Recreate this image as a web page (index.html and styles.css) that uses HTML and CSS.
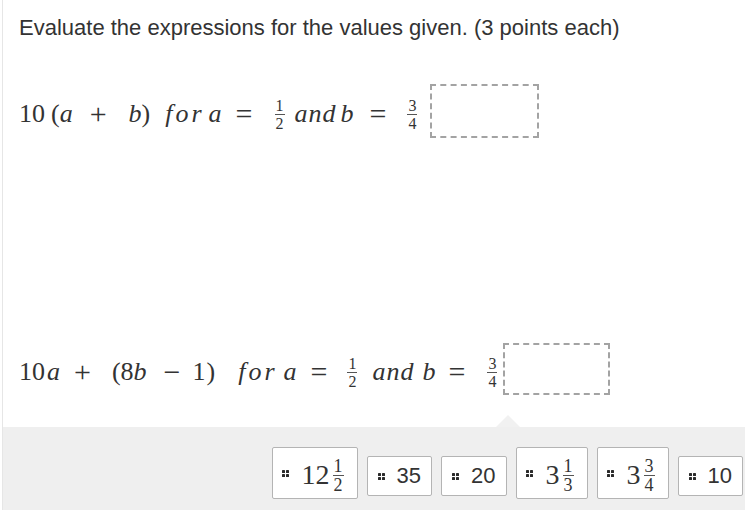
FILE: index.html
```html
<!DOCTYPE html>
<html>
<head>
<meta charset="utf-8">
<link rel="stylesheet" href="styles.css">
</head>
<body>
<div class="page">
  <p class="prompt">Evaluate the expressions for the values given. (3 points each)</p>

  <div class="ex ex1">
    <span class="m">10</span>
    <span class="m g6">(</span>
    <span class="m v">a</span>
    <span class="m o g17">+</span>
    <span class="m v g22">b</span>
    <span class="m">)</span>
    <span class="m v w-for g15">for</span>
    <span class="m v g7">a</span>
    <span class="m o g14">=</span>
    <span class="frac g22"><span class="num">1</span><span class="den">2</span></span>
    <span class="m v w-and g10">and</span>
    <span class="m v g5">b</span>
    <span class="m o g16">=</span>
    <span class="frac g21"><span class="num">3</span><span class="den">4</span></span>
    <span class="drop drop1 g13"></span>
  </div>

  <div class="ex ex2">
    <span class="m">10</span>
    <span class="m v g2">a</span>
    <span class="m o g14">+</span>
    <span class="m g21">(</span>
    <span class="m">8</span>
    <span class="m v">b</span>
    <span class="m o g17">&minus;</span>
    <span class="m g12">1</span>
    <span class="m g1">)</span>
    <span class="m v w-for g23">for</span>
    <span class="m v g9">a</span>
    <span class="m o g14">=</span>
    <span class="frac g20"><span class="num">1</span><span class="den">2</span></span>
    <span class="m v w-and g15">and</span>
    <span class="m v g9">b</span>
    <span class="m o g13">=</span>
    <span class="frac g22"><span class="num">3</span><span class="den">4</span></span>
    <span class="drop drop2 g6"></span>
  </div>

  <div class="tray">
    <span class="notch"></span>
    <div class="tile tall">
      <svg class="grip" width="7" height="7" viewBox="0 0 7 7"><rect x="0" y="0" width="3" height="3" rx="0.6"/><rect x="4" y="0" width="3" height="3" rx="0.6"/><rect x="0" y="4" width="3" height="3" rx="0.6"/><rect x="4" y="4" width="3" height="3" rx="0.6"/></svg>
      <span class="tm">12</span><span class="frac tf"><span class="num">1</span><span class="den">2</span></span>
    </div>
    <div class="tile short">
      <svg class="grip" width="7" height="7" viewBox="0 0 7 7"><rect x="0" y="0" width="3" height="3" rx="0.6"/><rect x="4" y="0" width="3" height="3" rx="0.6"/><rect x="0" y="4" width="3" height="3" rx="0.6"/><rect x="4" y="4" width="3" height="3" rx="0.6"/></svg>
      <span class="ts">35</span>
    </div>
    <div class="tile short">
      <svg class="grip" width="7" height="7" viewBox="0 0 7 7"><rect x="0" y="0" width="3" height="3" rx="0.6"/><rect x="4" y="0" width="3" height="3" rx="0.6"/><rect x="0" y="4" width="3" height="3" rx="0.6"/><rect x="4" y="4" width="3" height="3" rx="0.6"/></svg>
      <span class="ts">20</span>
    </div>
    <div class="tile tall">
      <svg class="grip" width="7" height="7" viewBox="0 0 7 7"><rect x="0" y="0" width="3" height="3" rx="0.6"/><rect x="4" y="0" width="3" height="3" rx="0.6"/><rect x="0" y="4" width="3" height="3" rx="0.6"/><rect x="4" y="4" width="3" height="3" rx="0.6"/></svg>
      <span class="tm">3</span><span class="frac tf"><span class="num">1</span><span class="den">3</span></span>
    </div>
    <div class="tile tall">
      <svg class="grip" width="7" height="7" viewBox="0 0 7 7"><rect x="0" y="0" width="3" height="3" rx="0.6"/><rect x="4" y="0" width="3" height="3" rx="0.6"/><rect x="0" y="4" width="3" height="3" rx="0.6"/><rect x="4" y="4" width="3" height="3" rx="0.6"/></svg>
      <span class="tm">3</span><span class="frac tf"><span class="num">3</span><span class="den">4</span></span>
    </div>
    <div class="tile short">
      <svg class="grip" width="7" height="7" viewBox="0 0 7 7"><rect x="0" y="0" width="3" height="3" rx="0.6"/><rect x="4" y="0" width="3" height="3" rx="0.6"/><rect x="0" y="4" width="3" height="3" rx="0.6"/><rect x="4" y="4" width="3" height="3" rx="0.6"/></svg>
      <span class="ts">10</span>
    </div>
  </div>
</div>
</body>
</html>
```

FILE: styles.css
```css
* { box-sizing: border-box; }
html, body { margin: 0; padding: 0; background: #fff; }
body { width: 745px; height: 510px; overflow: hidden; }

.page {
  margin-left: 2px;
  height: 510px;
  border-left: 1px solid #e6e6e6;
  display: flex;
  flex-direction: column;
  color: #333;
}

.prompt {
  margin: 15px 0 0;
  padding-left: 16px;
  font: 22px/26px "Liberation Sans", Arial, sans-serif;
  color: #333;
}

.ex {
  display: flex;
  align-items: center;
  padding-left: 16px;
  font-family: "Liberation Serif", "Times New Roman", serif;
  color: #333;
}
.ex1 { margin-top: 43px; height: 53px; }
.ex2 { margin-top: 206px; height: 51px; }

.m { font-size: 26px; line-height: 30px; margin-top: 6px; }
.v { font-style: italic; }
.o { font-size: 30px; line-height: 30px; font-style: normal; }
.w-for { letter-spacing: 3px; margin-right: -3px; }
.w-and { letter-spacing: 1px; margin-right: -1px; }

.g1 { margin-left: 1px; }
.g2 { margin-left: 2px; }
.g5 { margin-left: 5px; }
.g6 { margin-left: 6px; }
.g7 { margin-left: 7px; }
.g9 { margin-left: 9px; }
.g10 { margin-left: 10px; }
.g12 { margin-left: 12px; }
.g13 { margin-left: 13px; }
.g14 { margin-left: 14px; }
.g15 { margin-left: 15px; }
.g16 { margin-left: 16px; }
.g17 { margin-left: 17px; }
.g20 { margin-left: 20px; }
.g21 { margin-left: 21px; }
.g22 { margin-left: 22px; }
.g23 { margin-left: 23px; }

.frac {
  display: inline-flex;
  flex-direction: column;
  align-items: stretch;
  font-family: "Liberation Serif", "Times New Roman", serif;
  font-size: 16px;
  line-height: 15px;
  text-align: center;
  margin-top: 8px;
}
.frac .num { border-bottom: 1px solid #555; padding: 0 1px 1px; }
.frac .den { padding-top: 1px; }

.drop {
  border: 2px dashed #a3a3a3;
  background: #fff;
}
.drop1 { width: 109px; height: 54px; }
.drop2 { width: 107px; height: 52px; }

.tray {
  position: relative;
  margin-top: 33px;
  flex: 1;
  background: #efefef;
  display: flex;
  justify-content: flex-end;
  align-items: flex-start;
  gap: 9px;
  padding: 20px 2px 0 0;
}
.notch {
  position: absolute;
  left: 493px;
  top: -12px;
  width: 0;
  height: 0;
  border-left: 12px solid transparent;
  border-right: 12px solid transparent;
  border-bottom: 12px solid #f1f1f1;
}

.tile {
  display: flex;
  align-items: center;
  background: #fff;
  border: 1px solid #b4b4b4;
  border-radius: 2px;
  color: #333;
  padding: 0 10px;
}
.tall { height: 52px; padding: 0 13px 0 9px; }
.short { height: 40px; margin-top: 9px; }

.grip { fill: #2a2a2a; flex: none; margin-right: 12px; }
.tall .grip { margin-right: 13px; }

.ts {
  font: 22px/24px "Liberation Sans", Arial, sans-serif;
}
.tm {
  font: 28px/30px "Liberation Serif", "Times New Roman", serif;
  margin-top: 3px;
}
.tf { margin-left: 3px; margin-top: 5px; font-size: 18px; line-height: 16px; }
```
